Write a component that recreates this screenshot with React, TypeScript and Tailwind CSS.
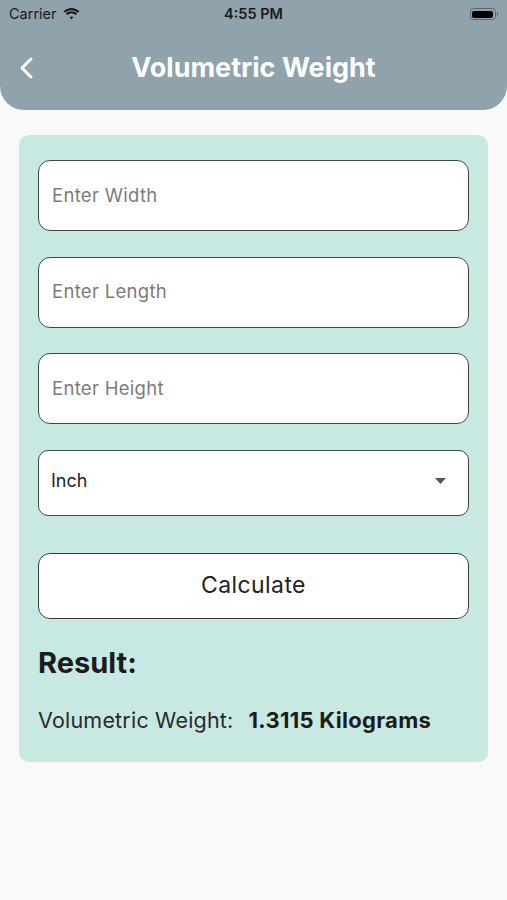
import React from 'react';

function Field({ placeholder }: { placeholder: string }) {
  return (
    <div className="h-[71px] rounded-[12px] border-[1.5px] border-[#454545] bg-white flex items-center px-[13px]">
      <span className="text-[18.5px] text-[#7b7b7b] tracking-[0.3px]">{placeholder}</span>
    </div>
  );
}

export default function App() {
  return (
    <div className="w-[507px] h-[900px] bg-[#f9f9f9] font-['Inter',sans-serif] text-[#222]">
      <div className="h-[110px] bg-[#90a2ab] rounded-b-[24px] flex flex-col">
        <div className="h-[28px] flex items-center justify-between px-[9px] text-[#1b1b1b]">
          <div className="flex items-center gap-[6px] w-[120px]">
            <span className="text-[14.5px]">Carrier</span>
            <svg width="17" height="12" viewBox="0 0 17 12" fill="#1b1b1b">
              <path d="M8.5 2.2c2.5 0 4.7 1 6.4 2.6L16.4 3.3C14.3 1.3 11.5 0 8.5 0S2.7 1.3.6 3.3l1.5 1.5C3.8 3.2 6 2.2 8.5 2.2z" />
              <path d="M8.5 5.4c1.6 0 3 .6 4.1 1.6l1.5-1.5C12.6 4.1 10.6 3.2 8.5 3.2S4.4 4.1 2.9 5.5L4.4 7c1.1-1 2.5-1.6 4.1-1.6z" />
              <path d="M8.5 8.4c.8 0 1.4.3 1.9.7L8.5 11.6 6.6 9.1c.5-.4 1.1-.7 1.9-.7z" />
            </svg>
          </div>
          <span className="text-[14.5px] font-semibold">4:55 PM</span>
          <div className="w-[120px] flex justify-end">
            <div className="flex items-center">
              <div className="w-[26px] h-[12px] rounded-[3.5px] border border-[#5a6870] p-[1.5px]">
                <div className="w-full h-full rounded-[2px] bg-black" />
              </div>
              <div className="w-[1.5px] h-[4px] bg-[#5a6870] rounded-r ml-[1px]" />
            </div>
          </div>
        </div>
        <div className="flex-1 relative flex items-center justify-center pb-[2px]">
          <svg className="absolute left-[19px] top-[28px]" width="16" height="24" viewBox="0 0 16 24" fill="none" stroke="white" strokeWidth="3" strokeLinecap="round" strokeLinejoin="round">
            <path d="M12 3 3 12l9 9" />
          </svg>
          <span className="text-white text-[27px] font-bold tracking-[0px]">Volumetric Weight</span>
        </div>
      </div>

      <div className="mx-[19px] mt-[25px] bg-[#c8e9e2] rounded-[10px] px-[19px] pt-[25px] pb-[28px]">
        <div className="flex flex-col gap-[25.5px]">
          <Field placeholder="Enter Width" />
          <Field placeholder="Enter Length" />
          <Field placeholder="Enter Height" />
          <div className="h-[66px] rounded-[10px] border-[1.5px] border-[#454545] bg-white flex items-center justify-between pl-[12px] pr-[22px] pb-[4px]">
            <span className="text-[18px] text-[#222]">Inch</span>
            <svg width="11" height="6" viewBox="0 0 11 6" fill="#555">
              <path d="M0 0h11L5.5 6z" />
            </svg>
          </div>
        </div>
        <button className="mt-[37px] w-full h-[66px] rounded-[12px] border-[1.5px] border-[#3a3a3a] bg-white text-[23px] text-[#222] tracking-[0.4px]">
          Calculate
        </button>
        <div className="mt-[26px] text-[29px] font-bold text-[#1c1c1c] leading-[36px]">Result:</div>
        <div className="mt-[25px] flex items-center gap-[15px] leading-[28px]">
          <span className="text-[#2a2a2a] text-[21.5px] tracking-[0.2px]">Volumetric Weight:</span>
          <span className="font-bold text-[#1c1c1c] text-[22px] tracking-[0.3px]">1.3115 Kilograms</span>
        </div>
      </div>
    </div>
  );
}
